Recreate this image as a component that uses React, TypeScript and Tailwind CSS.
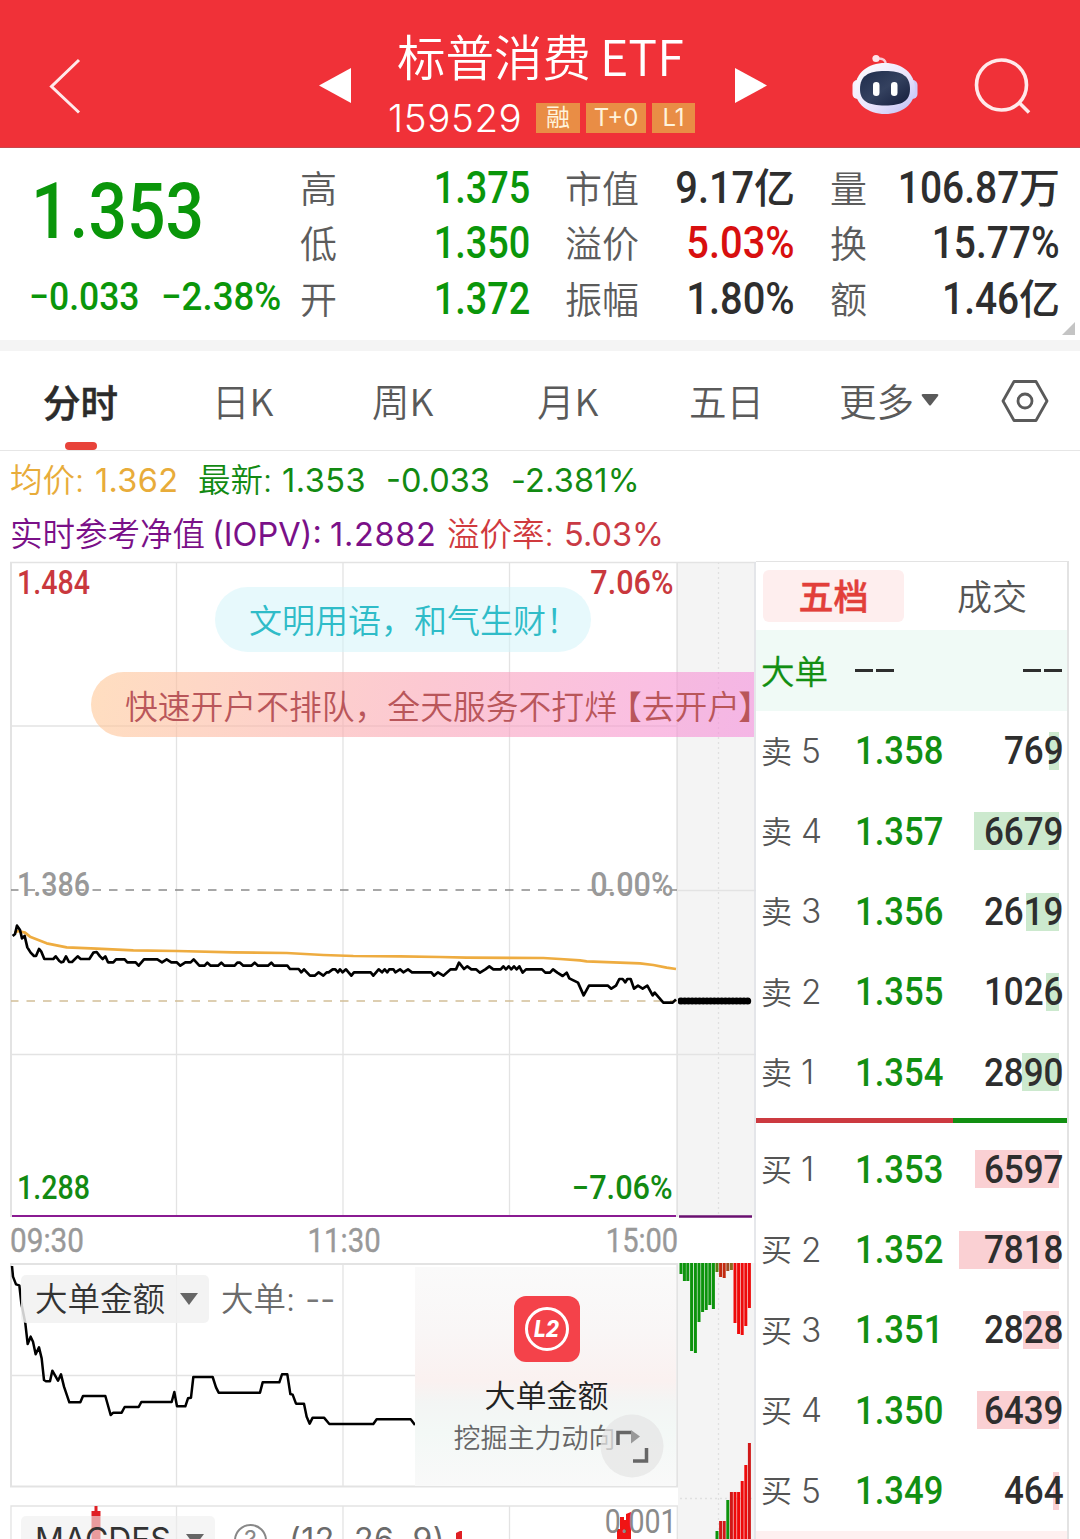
import React from "react";

const CJK = "font-['Inter','Noto_Sans_CJK_SC',sans-serif]";

const quotes = [
  { id: 1, label: "高", value: "1.375", unit: "", color: "text-[#0a960a]" },
  { id: 2, label: "市值", value: "9.17", unit: "亿", color: "text-[#2e2e2e]" },
  { id: 3, label: "量", value: "106.87", unit: "万", color: "text-[#2e2e2e]" },
  { id: 4, label: "低", value: "1.350", unit: "", color: "text-[#0a960a]" },
  { id: 5, label: "溢价", value: "5.03%", unit: "", color: "text-[#d80f0f]" },
  { id: 6, label: "换", value: "15.77%", unit: "", color: "text-[#2e2e2e]" },
  { id: 7, label: "开", value: "1.372", unit: "", color: "text-[#0a960a]" },
  { id: 8, label: "振幅", value: "1.80%", unit: "", color: "text-[#2e2e2e]" },
  { id: 9, label: "额", value: "1.46", unit: "亿", color: "text-[#2e2e2e]" },
];

// 每列数字的压缩比例
const columnScale = ["scale-x-[0.86]", "scale-x-[0.905]", "scale-x-[0.885]"];

const sells = [
  { name: "卖", level: 5, price: "1.358", volume: 769 },
  { name: "卖", level: 4, price: "1.357", volume: 6679 },
  { name: "卖", level: 3, price: "1.356", volume: 2619 },
  { name: "卖", level: 2, price: "1.355", volume: 1026 },
  { name: "卖", level: 1, price: "1.354", volume: 2890 },
];

const buys = [
  { name: "买", level: 1, price: "1.353", volume: 6597 },
  { name: "买", level: 2, price: "1.352", volume: 7818 },
  { name: "买", level: 3, price: "1.351", volume: 2828 },
  { name: "买", level: 4, price: "1.350", volume: 6439 },
  { name: "买", level: 5, price: "1.349", volume: 464 },
];

const GREEN = "#0c930c";
const RED = "#ee0a0a";

// [x, length, color]
const topBars: [number, number, string][] = [
  [2, 11, GREEN], [5.4, 18, GREEN], [8.8, 18, GREEN], [12.6, 88, GREEN],
  [16.4, 90, GREEN], [20, 59, GREEN], [23.6, 49, GREEN], [27.2, 47, GREEN],
  [30.8, 42, GREEN], [34.4, 46, GREEN], [38, 9, "#5a7a10"], [41.6, 14, "#c22a10"],
  [45.2, 15, "#c22a10"], [48.8, 8, "#a04a20"], [52.4, 7, "#8a6a20"], [56, 60, RED],
  [59.6, 71, RED], [63.2, 72, RED], [66.8, 63, RED], [70.4, 45, RED],
];
const bottomBars: [number, number, string][] = [
  [38, 8, GREEN], [41.6, 18, "#d01818"], [45.2, 18, "#d01818"], [48.8, 39, GREEN],
  [52.4, 47, "#d01818"], [56, 47, RED], [59.6, 47, RED], [63.2, 58, RED],
  [66.8, 74, RED], [70.4, 96, "#d01818"],
];

const pricePoints =
  "38,228 45,222 51,197 60,210 66,235 74,228 82,262 92,278 102,288 108,288 117,267 124,275 133,297 160,297 167,289 178,303 184,307 190,305 198,289 207,306 216,306 233,289 242,297 268,297 280,278 290,276 300,289 308,297 316,289 324,307 340,307 348,298 374,298 382,307 407,307 416,317 432,298 472,298 486,307 500,298 514,307 530,307 541,317 556,307 572,307 581,298 598,317 614,317 622,308 632,317 654,317 664,308 673,317 704,317 712,308 720,308 730,317 754,317 764,308 774,317 804,317 814,308 822,317 862,317 870,327 896,327 904,337 912,328 930,347 944,347 956,337 970,347 980,337 986,337 998,328 1006,328 1014,337 1020,328 1028,337 1038,328 1054,347 1062,337 1112,337 1120,347 1136,328 1146,337 1154,328 1162,337 1168,328 1180,328 1186,337 1200,328 1210,337 1224,328 1236,337 1294,337 1302,347 1314,337 1330,347 1352,328 1368,328 1377,308 1392,327 1402,319 1414,328 1428,328 1440,338 1456,328 1468,319 1480,328 1502,328 1510,319 1518,328 1526,319 1534,328 1542,319 1550,328 1558,319 1568,338 1578,328 1626,328 1636,338 1650,338 1659,328 1672,338 1688,348 1700,338 1708,355 1734,368 1751,406 1767,377 1824,377 1834,386 1848,377 1858,357 1868,357 1876,367 1882,357 1892,357 1902,386 1914,377 1928,386 1942,377 1958,406 1964,398 1990,428 2018,428 2028,418";
const avgPoints =
  "44,218 54,213 75,218 90,230 140,250 200,262 290,266 400,271 530,273 700,277 860,279 970,285 1060,288 1200,289 1320,291 1400,293 1630,294 1680,297 1740,301 1760,304 1840,307 1920,310 1960,315 2000,323 2028,327";
const flowPoints =
  "36,318 39,350 48,373 58,376 64,430 76,490 83,552 92,530 99,545 107,583 117,562 125,595 132,660 138,664 150,664 157,632 174,662 183,643 192,680 208,727 241,727 249,708 316,708 332,765 340,758 365,758 374,741 416,741 424,726 515,726 523,696 531,739 556,739 564,715 573,713 580,651 638,651 648,682 656,698 780,698 788,667 838,667 846,643 862,643 871,702 878,704 888,731 912,731 920,770 929,791 938,773 972,773 988,792 1120,792 1130,778 1232,778 1245,795";

// 窄体数字
const Num: React.FC<{ className?: string; children: React.ReactNode }> = ({
  className = "",
  children,
}) => (
  <span className={`inline-block whitespace-nowrap font-['Roboto',sans-serif] ${className}`}>
    {children}
  </span>
);

const Robot: React.FC = () => (
  <svg width="66" height="62" viewBox="0 0 66 62">
    <defs>
      <linearGradient id="shell" x1="0" y1="0" x2="1" y2="1">
        <stop offset="0" stopColor="#ffffff" />
        <stop offset="0.6" stopColor="#e8e2fb" />
        <stop offset="1" stopColor="#b9bdf5" />
      </linearGradient>
      <linearGradient id="visor" x1="0" y1="0" x2="1" y2="1">
        <stop offset="0" stopColor="#1f2c4c" />
        <stop offset="0.5" stopColor="#34415f" />
        <stop offset="1" stopColor="#141d3c" />
      </linearGradient>
    </defs>
    <path d="M25 4.500c5-.5 8.500 1 9 6" fill="none" stroke="#f9c9d4" strokeWidth="2.500" />
    <circle cx="24" cy="4.500" r="3.600" fill="#fde4ea" />
    <rect x="0.500" y="26" width="10" height="19" rx="5" fill="#f6eefc" />
    <rect x="55.500" y="26" width="10" height="19" rx="5" fill="#cfcdf8" />
    <path d="M33 9c17 0 30 10 30 26 0 15-13 25-30 25S3 50 3 35C3 19 16 9 33 9z" fill="url(#shell)" />
    <path d="M33 17c17 0 25 5 25 18 0 12-8 16.500-25 16.500S8 47 8 35c0-13 8-18 25-18z" fill="url(#visor)" />
    <rect x="21" y="28" width="6.500" height="14" rx="3.200" fill="#fff" />
    <rect x="39" y="28" width="6.500" height="14" rx="3.200" fill="#fff" />
  </svg>
);

const Header: React.FC = () => (
  <header className="flex h-[148px] items-start border-b border-[#c9474c] bg-[#f03138] text-white">
    <svg className="mt-[58px] ml-[48px]" width="34" height="57" viewBox="0 0 34 57">
      <path d="M31 2L3.500 28.500 31 54.500" fill="none" stroke="#ffe9ea" strokeWidth="3" />
    </svg>
    <svg className="mt-[68px] ml-[237px]" width="32" height="35" viewBox="0 0 32 35">
      <path d="M32 0v35L0 17.500z" fill="#fff" />
    </svg>
    <div className="ml-[35px] flex w-[314px] flex-col items-start">
      <div className="mt-[24px] ml-[11px] flex h-[62px] items-center gap-[9px] whitespace-nowrap font-['Noto_Sans_CJK_SC',sans-serif] text-[48.5px] leading-none font-[350]">
        <span>标普消费</span>
        <span>ETF</span>
      </div>
      <div className="mt-[16px] flex h-[32px] items-center">
        <span className="w-[148px] pl-[2px] font-['Inter',sans-serif] text-[38.5px] leading-none font-light tracking-[0.6px]">
          159529
        </span>
        <div className="ml-[2px] flex h-[30px] gap-[6px] font-['Inter','Noto_Sans_CJK_SC',sans-serif] text-[24px] leading-[30px] text-[#fff3dc]">
          <span className="w-[44px] bg-[#e98d45] text-center">融</span>
          <span className="w-[60px] bg-[#e98d45] text-center">T+0</span>
          <span className="w-[43px] bg-[#e98d45] text-center">L1</span>
        </div>
      </div>
    </div>
    <svg className="mt-[68px] ml-[35px]" width="32" height="35" viewBox="0 0 32 35">
      <path d="M0 0v35l32-17.500z" fill="#fff" />
    </svg>
    <div className="mt-[54px] ml-[85px]">
      <Robot />
    </div>
    <svg className="mt-[58px] ml-[56px]" width="58" height="58" viewBox="0 0 58 58">
      <circle cx="27.500" cy="27" r="25" fill="none" stroke="#ffe9ea" strokeWidth="3.600" />
      <path d="M45 44.500l10 10" stroke="#ffe9ea" strokeWidth="3.600" />
    </svg>
  </header>
);

const QuotePanel: React.FC = () => (
  <section className="relative flex h-[192px]">
    <div className="flex w-[301px] flex-col">
      <Num className="mt-[24px] ml-[31px] origin-left scale-x-[0.87] text-[78px] leading-[80px] font-medium text-[#0a960a]">
        1.353
      </Num>
      <div className="mt-[24px] ml-[29px] flex text-[39px] leading-[42px] text-[#0a960a]">
        <Num className="w-[132px] origin-left scale-x-[0.91] font-medium">−0.033</Num>
        <Num className="origin-left scale-x-[0.94] font-medium">−2.38%</Num>
      </div>
    </div>
    <div className="mt-[12px] grid h-[167px] w-[759px] grid-cols-[229px_265px_265px] grid-rows-3">
      {quotes.map((item, index) => (
        <div
          key={item.id}
          className={`flex items-center leading-none ${index % 3 === 0 ? "" : "pl-[36px]"}`}
        >
          <span className="-ml-px mb-px font-['Noto_Sans_CJK_SC',sans-serif] text-[37px] font-[350] text-[#5c5c5c]">
            {item.label}
          </span>
          <span className={`ml-auto flex items-center font-medium ${item.color}`}>
            <Num className={`origin-right text-[44px] ${columnScale[index % 3]}`}>
              {item.value}
            </Num>
            {item.unit && (
              <span className="mb-[5px] font-['Noto_Sans_CJK_SC',sans-serif] text-[41px]">
                {item.unit}
              </span>
            )}
          </span>
        </div>
      ))}
    </div>
    <svg className="absolute right-[5px] bottom-[5px]" width="13" height="13" viewBox="0 0 13 13">
      <path d="M13 0v13H0z" fill="#c4c4c4" />
    </svg>
  </section>
);

const Tabs: React.FC = () => (
  <nav className="flex h-[111px] items-center border-t-[11px] border-b border-t-[#f4f4f4] border-b-[#e6e6e6] font-['Noto_Sans_CJK_SC',sans-serif] text-[37.5px] leading-none font-[350] text-[#5a5a5a]">
    <div className="relative ml-[43px] flex h-full w-[169px] items-center font-medium text-[#2b2b2b]">
      <span className="[-webkit-text-stroke:0.5px_#2b2b2b]">分时</span>
      <span className="absolute bottom-0 left-[22px] h-[8px] w-[32px] rounded-full bg-[#e8433a]" />
    </div>
    <span className="mb-px w-[160px]">日K</span>
    <span className="mb-px w-[165px]">周K</span>
    <span className="mb-px w-[152px]">月K</span>
    <span className="mb-px w-[150px]">五日</span>
    <span className="mb-px flex w-[162px] items-center">
      更多
      <svg className="ml-[7px]" width="18" height="12" viewBox="0 0 18 12">
        <path d="M2 0h14q2 0 1 2l-7 9q-1 1-2 0L1 2Q0 0 2 0z" fill="#5a5a5a" />
      </svg>
    </span>
    <svg width="48" height="44" viewBox="0 0 48 44">
      <path
        d="M13 2.500h22L46 22 35 41.500H13L2 22z"
        fill="none"
        stroke="#5a5a5a"
        strokeWidth="2.800"
        strokeLinejoin="round"
      />
      <circle cx="24" cy="22" r="7" fill="none" stroke="#5a5a5a" strokeWidth="2.800" />
    </svg>
  </nav>
);

const Legend: React.FC = () => (
  <section
    className={`flex h-[111px] flex-col pl-[10px] text-[32.5px] font-[350] whitespace-nowrap ${CJK}`}
  >
    <div className="mt-[3px] flex h-[55px] items-center leading-none text-[#128a12]">
      <span className="w-[85px] text-[#e8ac3a]">均价:</span>
      <span className="w-[103px] font-normal tracking-[0.3px] text-[#e8ac3a]">1.362</span>
      <span className="w-[84px]">最新:</span>
      <span className="w-[104px] font-normal tracking-[0.5px]">1.353</span>
      <span className="w-[125px] font-normal">-0.033</span>
      <span className="font-normal tracking-[0.2px]">-2.381%</span>
    </div>
    <div className="flex h-[55px] items-center leading-none text-[#7a1088]">
      <span className="w-[202px]">实时参考净值</span>
      <span className="w-[118px] font-normal">(IOPV):</span>
      <span className="w-[117px] font-normal tracking-[0.7px]">1.2882</span>
      <span className="w-[117px] text-[#d03a3e]">溢价率:</span>
      <span className="font-normal text-[#c93a44]">5.03%</span>
    </div>
  </section>
);

const MainChart: React.FC = () => (
  <div className="relative h-[657px]">
    <svg className="block" width="668" height="657" viewBox="10 561 668 657">
      <g stroke="#e3e3e3" strokeWidth="1.300" fill="none">
        <path d="M10 562.500H678M176.500 562V1217M343 562V1217M509.500 562V1217M11 726H677M11 1054.500H677" />
        <path d="M11 562V1217M677.300 562V1217" strokeWidth="2" />
      </g>
      <path d="M11 890H677" stroke="#8a8a8a" strokeWidth="1.600" strokeDasharray="8.500 8" strokeDashoffset="1" />
      <path d="M11 1001H677" stroke="#d2bf98" strokeWidth="1.600" strokeDasharray="8.500 8" strokeDashoffset="1" />
      <g transform="translate(0 860) scale(0.33333)" fill="none" strokeLinejoin="round">
        <polyline points={avgPoints} stroke="#eeac40" strokeWidth="8" />
        <polyline points={pricePoints} stroke="#000" strokeWidth="8" />
      </g>
      <path d="M12 1216H676" stroke="#8a1b92" strokeWidth="2.200" />
    </svg>
    <Num className="absolute top-[3px] left-[7px] origin-left scale-x-[0.88] text-[32.5px] leading-[38px] font-medium text-[#c9383d]">
      1.484
    </Num>
    <Num className="absolute top-[3px] right-[5px] origin-right scale-x-[0.94] text-[32.5px] leading-[38px] font-medium text-[#c9383d]">
      7.06%
    </Num>
    <Num className="absolute top-[305px] left-[7px] origin-left scale-x-[0.88] text-[32.5px] leading-[38px] font-medium text-[#999]">
      1.386
    </Num>
    <Num className="absolute top-[305px] right-[5px] origin-right scale-x-[0.94] text-[32.5px] leading-[38px] font-medium text-[#999]">
      0.00%
    </Num>
    <Num className="absolute top-[608px] left-[7px] origin-left scale-x-[0.88] text-[32.5px] leading-[38px] font-medium text-[#128a12]">
      1.288
    </Num>
    <Num className="absolute top-[608px] right-[5px] origin-right scale-x-[0.945] text-[32.5px] leading-[38px] font-medium text-[#128a12]">
      −7.06%
    </Num>
  </div>
);

const FlowChart: React.FC = () => (
  <div className="relative h-[225px]">
    <svg className="block" width="668" height="225" viewBox="10 1263 668 225">
      <path
        d="M11 1375.500H415M176.500 1264V1486M343 1264V1486"
        stroke="#e3e3e3"
        strokeWidth="1.300"
      />
      <path d="M11 1264H677.300V1486.500H11z" fill="none" stroke="#e3e3e3" strokeWidth="2" />
      <g transform="translate(0 1160) scale(0.33333)">
        <polyline points={flowPoints} fill="none" stroke="#000" strokeWidth="7.500" strokeLinejoin="round" />
      </g>
    </svg>
    <div className={`absolute top-[12px] left-[11px] flex h-[48px] items-center text-[32.5px] leading-none font-[350] ${CJK}`}>
      <div className="flex h-full w-[188px] items-center rounded-[5px] bg-[#f1f1f1]/85 pt-[2px] pl-[14px] text-[#333]">
        大单金额
        <svg className="mb-[3px] ml-[15px]" width="18" height="12" viewBox="0 0 18 12">
          <path d="M0 0h18L9 12z" fill="#666" />
        </svg>
      </div>
      <span className="mt-[2px] ml-[12px] text-[#6b6b6b]">大单:</span>
      <span className="mt-[2px] ml-[10px] font-normal text-[#777]">--</span>
    </div>
    <div className="absolute top-[4px] left-[405px] flex h-[219px] w-[261px] flex-col items-center bg-[linear-gradient(180deg,#fafafa_0%,#f9f6f6_30%,#faf1f0_52%,#f3f5f4_62%,#f3f8f6_75%,#f9f9f9_100%)] pl-[2px]">
      <svg className="mt-[29px]" width="66" height="66" viewBox="0 0 66 66">
        <rect width="66" height="66" rx="12" fill="#f4424a" />
        <circle cx="33" cy="33" r="20.500" fill="none" stroke="#fff" strokeWidth="3" />
        <text
          x="32.500"
          y="41"
          textAnchor="middle"
          fill="#fff"
          fontFamily="Inter, sans-serif"
          fontWeight="800"
          fontStyle="italic"
          fontSize="22.500"
          textLength="25"
          lengthAdjust="spacingAndGlyphs"
        >
          L2
        </text>
      </svg>
      <span className={`mt-[18px] text-[31px] leading-[31px] font-[350] text-[#222] ${CJK}`}>
        大单金额
      </span>
      <span className="mt-[10px] mr-[24px] font-['Noto_Sans_CJK_SC',sans-serif] text-[27px] leading-[31px] font-[350] text-[#666]">
        挖掘主力动向
      </span>
    </div>
    <svg className="absolute top-[151px] left-[590px]" width="64" height="64" viewBox="0 0 64 64">
      <circle cx="32" cy="32" r="31.500" fill="#e6e6e6" fillOpacity="0.750" />
      <path d="M31 16l9 6.500-9 7z" fill="#999" />
      <path d="M18 31V18.500H31" fill="none" stroke="#666" strokeWidth="3.500" />
      <path d="M33 47H46.500V34" fill="none" stroke="#666" strokeWidth="3.500" />
    </svg>
  </div>
);

const MacdChart: React.FC = () => (
  <div className="relative mt-[17px] h-[34px]">
    <svg className="block" width="668" height="34" viewBox="10 1505 668 34">
      <path
        d="M11 1539V1506H677.300V1539M176.500 1506V1539M343 1506V1539M509.500 1506V1539"
        fill="none"
        stroke="#e3e3e3"
        strokeWidth="1.300"
      />
      <path d="M91.500 1539V1511H94.500V1506H97.500V1511H100.500V1539z" fill="#e01f24" />
      <path d="M456 1539V1533L460 1531H462V1539z" fill="#e01f24" />
      <path d="M617 1539V1529H620V1517H624V1520H626V1514L631 1512V1539z" fill="#f01414" />
    </svg>
    <div className={`absolute top-[11px] left-[11px] flex h-[48px] items-center text-[32px] leading-none whitespace-nowrap ${CJK}`}>
      <div className="flex h-full w-[194px] items-center rounded-[5px] bg-[#eeeeee]/60 pl-[14px] text-[#333]">
        <span className="w-[151px] text-[32px]">MACDFS</span>
        <svg width="18" height="12" viewBox="0 0 18 12">
          <path d="M0 0h18L9 12z" fill="#666" />
        </svg>
      </div>
      <span className="ml-[19px] flex h-[33px] w-[33px] items-center justify-center rounded-full border-2 border-[#888] text-[24px] text-[#888]">
        ?
      </span>
      <span className="ml-[22px] tracking-[0.5px] text-[#6b6b6b]">(12, 26, 9)</span>
    </div>
    <Num className="absolute top-[-2px] right-[1px] origin-right scale-x-[0.88] text-[32.5px] leading-[38px] text-[#8a8a8a]">
      0.001
    </Num>
  </div>
);

const AfterHours: React.FC = () => (
  <svg className="block" width="78" height="978" viewBox="0 0 78 978">
    <rect x="0" y="1" width="78" height="655" fill="#f4f4f4" />
    <rect x="0" y="702" width="78" height="276" fill="#f4f4f4" />
    <path d="M0 1.500H78M0 329.500H78M0 493.500H78" stroke="#e3e3e3" strokeWidth="1.300" />
    <path d="M77 1V978" stroke="#e0e2e6" strokeWidth="1.600" />
    <path d="M40.500 1V656M40.500 702V978M2 937.500H76" stroke="#e0e0e0" strokeWidth="1.300" strokeDasharray="2 3" />
    <path d="M1 440H72" stroke="#000" strokeWidth="6" />
    <path d="M3 440H73" stroke="#000" strokeWidth="7" strokeLinecap="round" strokeDasharray="0.100 3.600" />
    <path d="M1 655.500H74" stroke="#6a1070" strokeWidth="2.500" />
    {topBars.map(([x, len, color]) => (
      <rect key={x} x={x - 0.5} y="702" width="3" height={len} fill={color} />
    ))}
    {bottomBars.map(([x, len, color]) => (
      <rect key={x} x={x - 0.5} y={978 - len} width="3" height={len} fill={color} />
    ))}
  </svg>
);

const OrderRow: React.FC<{
  item: { name: string; level: number; price: string; volume: number };
  bar: string;
}> = ({ item, bar }) => (
  <div className="relative flex h-[80.3px] items-center pt-px pr-[3px] pl-[5px] leading-none">
    <span
      className={`absolute top-[21px] right-[8px] h-[38px] ${bar}`}
      style={{ width: Math.round((item.volume / 7818) * 100) }}
    />
    <span className="mb-[5px] w-[40px] font-['Noto_Sans_CJK_SC',sans-serif] text-[31px] font-[350] text-[#555]">
      {item.name}
    </span>
    <span className="w-[54px] font-['Inter',sans-serif] text-[33.5px] font-[350] text-[#555]">
      {item.level}
    </span>
    <Num className="origin-left scale-x-[0.9] text-[38.5px] font-medium text-[#128f12]">
      {item.price}
    </Num>
    <Num className="relative ml-auto origin-right scale-x-[0.91] text-[38.5px] font-medium text-[#2e2e2e]">
      {item.volume}
    </Num>
  </div>
);

const OrderBook: React.FC = () => (
  <aside className="h-[978px] w-[313px] overflow-hidden border-t border-r-2 border-[#e3e3e3] font-['Noto_Sans_CJK_SC',sans-serif]">
    <div className="flex h-[68px] items-center pl-[7px] text-[35px] leading-none">
      <span className="flex h-[52px] w-[141px] items-center justify-center rounded-[6px] bg-[#feeeee] pb-[3px] font-medium text-[#e23f3a] [-webkit-text-stroke:0.5px_#e23f3a]">
        五档
      </span>
      <span className="mb-[4px] ml-[53px] font-[350] text-[#555]">成交</span>
    </div>
    <div className="flex h-[81px] items-center bg-[#f0faf6] pr-[5px] pl-[5px] text-[33.5px] leading-none">
      <span className="mb-[2px] w-[94px] font-[350] text-[#128f12] [-webkit-text-stroke:0.3px_#128f12]">
        大单
      </span>
      <span className="flex gap-[3px]">
        <i className="h-[3px] w-[18px] bg-[#2e2e2e]" />
        <i className="h-[3px] w-[18px] bg-[#2e2e2e]" />
      </span>
      <span className="ml-auto flex gap-[3px]">
        <i className="h-[3px] w-[18px] bg-[#2e2e2e]" />
        <i className="h-[3px] w-[18px] bg-[#2e2e2e]" />
      </span>
    </div>
    {sells.map((item) => (
      <OrderRow key={item.level} item={item} bar="bg-[#cce9ce]" />
    ))}
    <div className="flex h-[17px] items-center">
      <div className="h-[5px] w-[197px] bg-[#cc3a40]" />
      <div className="h-[5px] flex-1 bg-[#128f12]" />
    </div>
    {buys.map((item) => (
      <OrderRow key={item.level} item={item} bar="bg-[#fad0d3]" />
    ))}
    <div className="h-[20px] bg-[#fef0f0]" />
  </aside>
);

const App: React.FC = () => {
  return (
    <div className="h-[1539px] w-[1080px] overflow-hidden bg-white">
      <Header />
      <QuotePanel />
      <Tabs />
      <Legend />
      <main className="relative -mt-px flex h-[978px] pl-[10px]">
        <div className="w-[668px]">
          <MainChart />
          <div className="flex h-[45px] items-center justify-between pb-px text-[33px] leading-none text-[#999] [-webkit-text-stroke:0.4px_#999]">
            <Num className="origin-left scale-x-[0.9]">09:30</Num>
            <Num className="scale-x-[0.89]">11:30</Num>
            <Num className="origin-right scale-x-[0.88]">15:00</Num>
          </div>
          <FlowChart />
          <MacdChart />
        </div>
        <AfterHours />
        <OrderBook />
        {/* 弹幕 */}
        <div className="absolute top-[26px] left-[215px] h-[65px] w-[376px] rounded-full bg-[#d4f4fa]/55 pl-[34px] font-['Noto_Sans_CJK_SC',sans-serif] text-[33px] leading-[64px] font-[350] whitespace-nowrap text-[#2fbcc8]">
          文明用语，和气生财！
        </div>
        <div className="absolute top-[111px] left-[91px] h-[65px] w-[663px] overflow-hidden rounded-l-full bg-[linear-gradient(100deg,#ffc89699_0%,#faa4b499_50%,#f58cdc99_100%)] pl-[34px] font-['Noto_Sans_CJK_SC',sans-serif] text-[32.8px] leading-[65px] font-[350] whitespace-nowrap text-[#b9565a]">
          快速开户不排队，全天服务不打烊<span className="-ml-[8px]">【去开户</span>
          <span className="-ml-[2px]">】</span>
        </div>
      </main>
    </div>
  );
};

export default App;
